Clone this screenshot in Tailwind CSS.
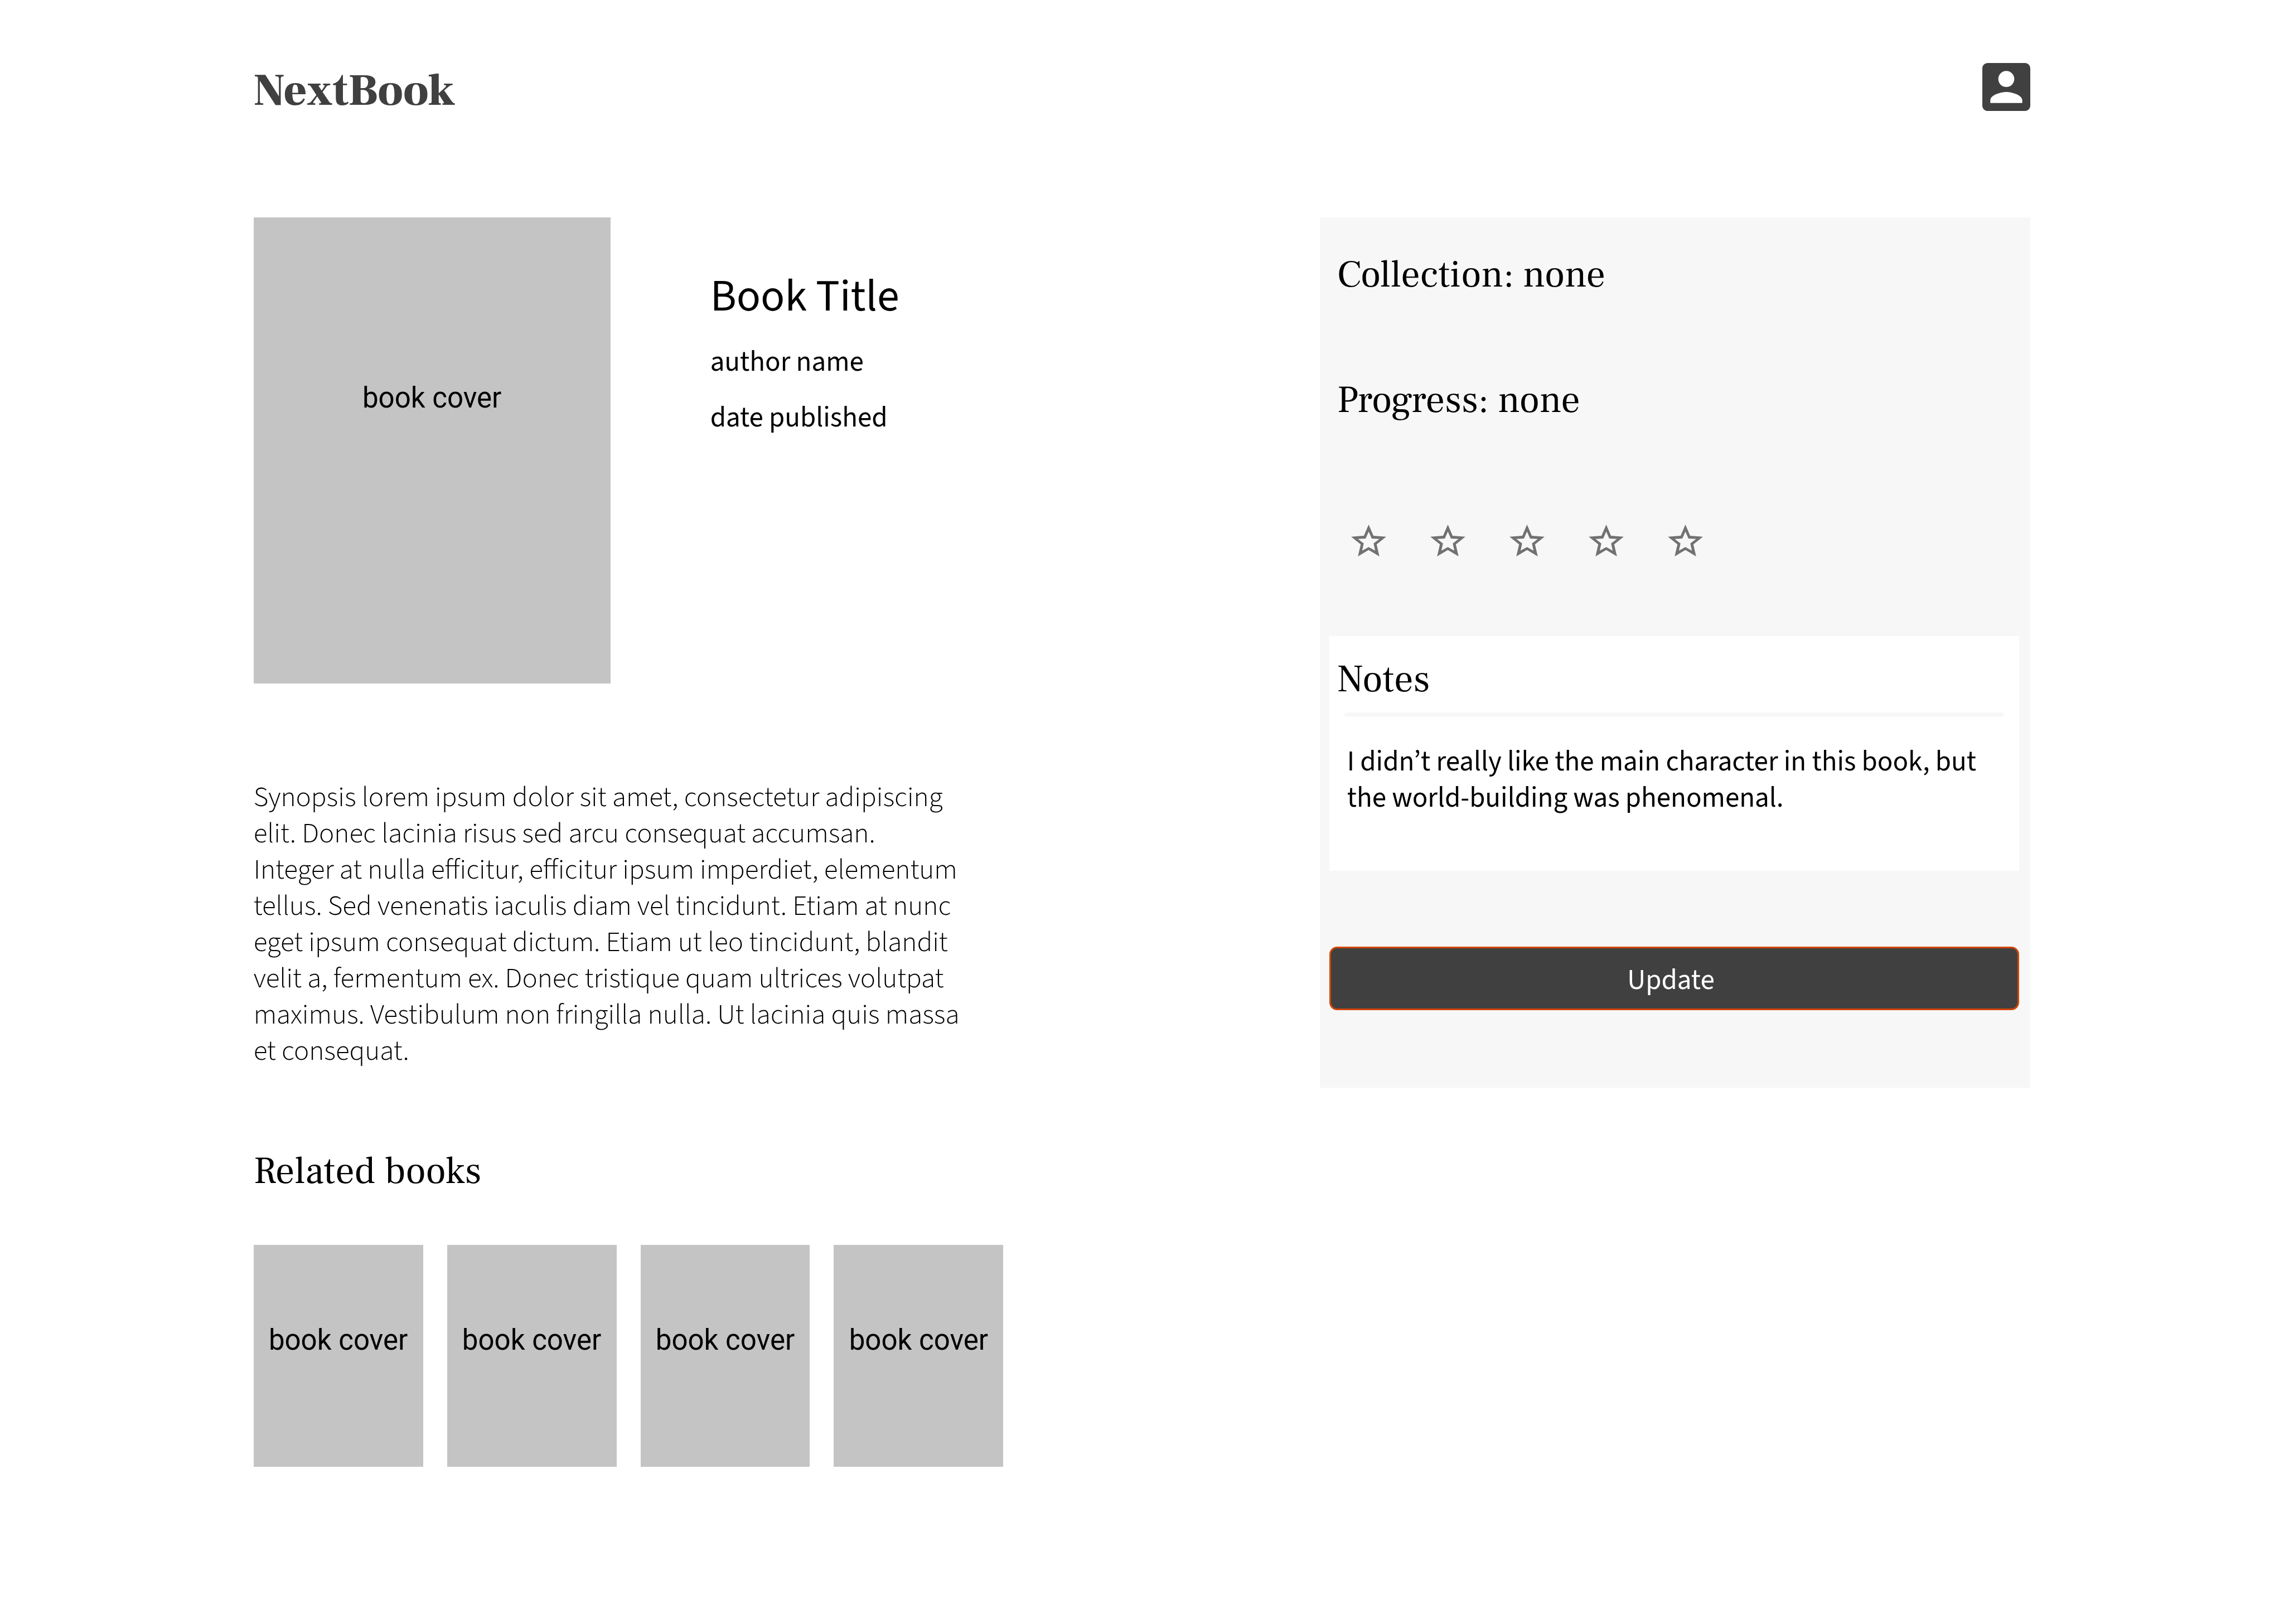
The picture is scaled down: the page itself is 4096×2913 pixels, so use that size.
<!DOCTYPE html>
<html lang="en">
<head>
<meta charset="utf-8">
<title>NextBook</title>
<script src="https://cdn.jsdelivr.net/npm/@tailwindcss/browser@4"></script>
</head>
<body class="bg-white text-black font-['Source_Sans_3','Noto_Sans_CJK_SC',sans-serif] text-[51px] leading-[65px]">
  <div class="px-[11.1%]">
    <header class="flex items-start justify-between pt-[113px]">
      <a href="#" class="font-['Frank_Ruhl_Libre','Liberation_Serif',serif] text-[80px] leading-[100px] font-black text-[#404040]">NextBook</a>
      <button type="button" aria-label="Account" class="text-[#404040]">
        <svg class="block size-[86px]" viewBox="3 3 18 18" fill="currentColor" aria-hidden="true"><path d="M3 5v14c0 1.1.89 2 2 2h14c1.1 0 2-.9 2-2V5c0-1.1-.9-2-2-2H5c-1.11 0-2 .9-2 2zm12 4c0 1.66-1.34 3-3 3s-3-1.34-3-3 1.34-3 3-3 3 1.34 3 3zm-9 8c0-2 4-3.1 6-3.1s6 1.1 6 3.1v1H6v-1z"/></svg>
      </button>
    </header>

    <main class="flex items-start justify-between pt-[177px]">
      <div class="w-[42.2%]">
        <section class="flex gap-[179px]">
          <div class="flex h-[836px] w-[640px] justify-center bg-[#c4c4c4] pt-[291px] font-[Roboto,sans-serif]">book cover</div>
          <div class="pt-[92px]">
            <h1 class="text-[80px] leading-[100px]">Book Title</h1>
            <p class="mt-[35px]">author name</p>
            <p class="mt-[35px]">date published</p>
          </div>
        </section>

        <p class="mt-[172px] max-w-[1280px] font-light">Synopsis lorem ipsum dolor sit amet, consectetur adipiscing elit. Donec lacinia risus sed arcu consequat accumsan.<br>Integer at nulla efficitur, efficitur ipsum imperdiet, elementum tellus. Sed venenatis iaculis diam vel tincidunt. Etiam at nunc eget ipsum consequat dictum. Etiam ut leo tincidunt, blandit velit a, fermentum ex. Donec tristique quam ultrices volutpat maximus. Vestibulum non fringilla nulla. Ut lacinia quis massa et consequat.</p>

        <section>
          <h2 class="mt-[143px] font-['Frank_Ruhl_Libre','Liberation_Serif',serif] text-[68px] leading-[80px]">Related books</h2>
          <ul class="mt-[92px] grid grid-cols-4 gap-[43px] font-[Roboto,sans-serif]">
            <li><a href="#" class="flex h-[398px] justify-center bg-[#c4c4c4] pt-[138px]">book cover</a></li>
            <li><a href="#" class="flex h-[398px] justify-center bg-[#c4c4c4] pt-[138px]">book cover</a></li>
            <li><a href="#" class="flex h-[398px] justify-center bg-[#c4c4c4] pt-[138px]">book cover</a></li>
            <li><a href="#" class="flex h-[398px] justify-center bg-[#c4c4c4] pt-[138px]">book cover</a></li>
          </ul>
        </section>
      </div>

      <form class="flex w-2/5 flex-col bg-[#f7f7f7] pt-[63px] pr-[20px] pb-[139px] pl-[17px]">
        <div class="pl-[14px] font-['Frank_Ruhl_Libre','Liberation_Serif',serif] text-[68px] leading-[80px]">
          <p>Collection: none</p>
          <p class="mt-[145px]">Progress: none</p>
        </div>
        <div role="radiogroup" aria-label="Rating" class="mt-[183px] ml-[39px] flex gap-[79px] text-[#717171]">
          <label class="relative"><input type="radio" name="rating" value="1" aria-label="1 star" class="sr-only"><svg class="block h-[57px] w-[63px]" viewBox="54 72 264 240" aria-hidden="true"><path fill="currentColor" d="M186 72l36 84 96 8-72 57 21 91-81-48-81 48 21-91-72-57 96-8z"/><path fill="#f7f7f7" d="M186 125l23 52 58 3-44 34 12 55-49-28-49 28 12-55-44-34 58-3z"/></svg></label>
          <label class="relative"><input type="radio" name="rating" value="2" aria-label="2 stars" class="sr-only"><svg class="block h-[57px] w-[63px]" viewBox="54 72 264 240" aria-hidden="true"><path fill="currentColor" d="M186 72l36 84 96 8-72 57 21 91-81-48-81 48 21-91-72-57 96-8z"/><path fill="#f7f7f7" d="M186 125l23 52 58 3-44 34 12 55-49-28-49 28 12-55-44-34 58-3z"/></svg></label>
          <label class="relative"><input type="radio" name="rating" value="3" aria-label="3 stars" class="sr-only"><svg class="block h-[57px] w-[63px]" viewBox="54 72 264 240" aria-hidden="true"><path fill="currentColor" d="M186 72l36 84 96 8-72 57 21 91-81-48-81 48 21-91-72-57 96-8z"/><path fill="#f7f7f7" d="M186 125l23 52 58 3-44 34 12 55-49-28-49 28 12-55-44-34 58-3z"/></svg></label>
          <label class="relative"><input type="radio" name="rating" value="4" aria-label="4 stars" class="sr-only"><svg class="block h-[57px] w-[63px]" viewBox="54 72 264 240" aria-hidden="true"><path fill="currentColor" d="M186 72l36 84 96 8-72 57 21 91-81-48-81 48 21-91-72-57 96-8z"/><path fill="#f7f7f7" d="M186 125l23 52 58 3-44 34 12 55-49-28-49 28 12-55-44-34 58-3z"/></svg></label>
          <label class="relative"><input type="radio" name="rating" value="5" aria-label="5 stars" class="sr-only"><svg class="block h-[57px] w-[63px]" viewBox="54 72 264 240" aria-hidden="true"><path fill="currentColor" d="M186 72l36 84 96 8-72 57 21 91-81-48-81 48 21-91-72-57 96-8z"/><path fill="#f7f7f7" d="M186 125l23 52 58 3-44 34 12 55-49-28-49 28 12-55-44-34 58-3z"/></svg></label>
        </div>
        <div class="mt-[143px] flex h-[421px] flex-col bg-white pt-[38px]">
          <label for="notes" class="pl-[14px] font-['Frank_Ruhl_Libre','Liberation_Serif',serif] text-[68px] leading-[80px]">Notes</label>
          <div class="mt-[19px] mr-[28px] ml-[27px] h-2 shrink-0 rounded-full bg-[#f7f7f7]"></div>
          <textarea id="notes" class="mt-[48px] block w-full grow resize-none overflow-hidden px-[32px] outline-none">I didn’t really like the main character in this book, but the world-building was phenomenal.</textarea>
        </div>
        <button type="submit" class="mt-[136px] h-[114px] rounded-[14px] border-3 border-[#d44506] bg-[#404040] pt-[6px] pr-[12px] text-white">Update</button>
      </form>
    </main>
  </div>
</body>
</html>
